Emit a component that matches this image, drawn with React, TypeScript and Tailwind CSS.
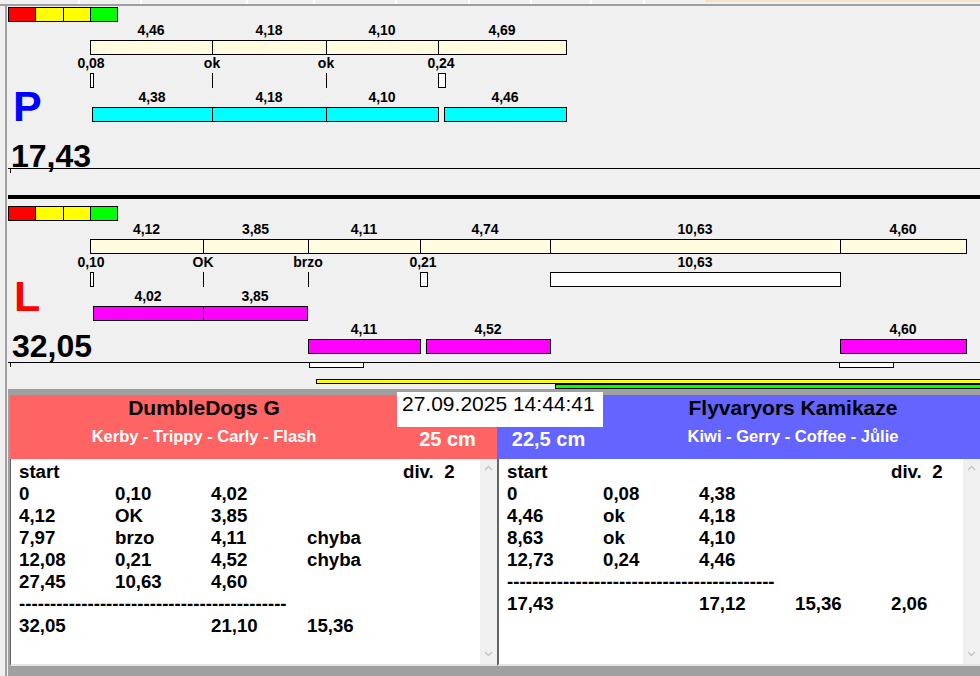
import React from "react";

// Charts are drawn in page coordinates; each svg shifts itself to its panel origin.
const OX = 8;

function R({ x1, x2, y1, y2, fill }: { x1: number; x2: number; y1: number; y2: number; fill: string }) {
  return <rect x={x1 + 0.5} y={y1 + 0.5} width={x2 - x1} height={y2 - y1} fill={fill} stroke="#000" strokeWidth="1" />;
}

function VL({ x, y1, y2 }: { x: number; y1: number; y2: number }) {
  return <line x1={x + 0.5} x2={x + 0.5} y1={y1} y2={y2 + 1} stroke="#000" strokeWidth="1" />;
}

function Texts({ items, base }: { items: [string, number][]; base: number }) {
  return (
    <>
      {items.map(([t, cx], i) => (
        <text key={i} x={cx} y={base} textAnchor="middle">
          {t}
        </text>
      ))}
    </>
  );
}

function Segs({ segs, y1, fill }: { segs: number[][]; y1: number; fill: string }) {
  return (
    <>
      {segs.map(([a, b]) => (
        <R key={a} x1={a} x2={b} y1={y1} y2={y1 + 14} fill={fill} />
      ))}
    </>
  );
}

function Lights({ y1 }: { y1: number }) {
  const y2 = y1 + 14;
  return (
    <>
      <R x1={8} x2={35} y1={y1} y2={y2} fill="#ff0000" />
      <R x1={35} x2={63} y1={y1} y2={y2} fill="#ffff00" />
      <R x1={63} x2={90} y1={y1} y2={y2} fill="#ffff00" />
      <R x1={90} x2={117} y1={y1} y2={y2} fill="#00ff00" />
    </>
  );
}

function Axis({ y }: { y: number }) {
  return (
    <>
      <line x1={OX} x2={990} y1={y + 0.5} y2={y + 0.5} stroke="#000" strokeWidth="1" />
      <VL x={10} y1={y} y2={y + 4} />
    </>
  );
}

const CREAM = "#fffce0";

function ChartSvg({ oy, h, children }: { oy: number; h: number; children: React.ReactNode }) {
  return (
    <svg className="absolute inset-0" width="972" height={h} viewBox={`0 0 972 ${h}`}>
      <g
        transform={`translate(${-OX} ${-oy})`}
        fontFamily="'Liberation Sans', Arial, sans-serif"
        fontSize="14"
        fontWeight="bold"
        fill="#000"
        shapeRendering="crispEdges"
      >
        {children}
      </g>
    </svg>
  );
}

function TopChart() {
  return (
    <div className="relative h-[189px] overflow-hidden">
      <ChartSvg oy={6} h={189}>
        <Lights y1={7} />
        <Texts items={[["4,46", 151], ["4,18", 269], ["4,10", 382], ["4,69", 502]]} base={35} />
        <Segs segs={[[90, 212], [212, 326], [326, 438], [438, 566]]} y1={40} fill={CREAM} />
        <Texts items={[["0,08", 91], ["ok", 212], ["ok", 326], ["0,24", 441]]} base={68} />
        <R x1={90} x2={93} y1={73} y2={87} fill="#fff" />
        <VL x={212} y1={73} y2={87} />
        <VL x={326} y1={73} y2={87} />
        <R x1={438} x2={445} y1={73} y2={87} fill="#fff" />
        <Texts items={[["4,38", 152], ["4,18", 269], ["4,10", 382], ["4,46", 505]]} base={102} />
        <Segs segs={[[92, 212], [212, 326], [326, 438], [444, 566]]} y1={107} fill="#00ffff" />
        <Axis y={168} />
      </ChartSvg>
      <div className="relative flex flex-col items-start pt-[79px] pl-[3px] font-bold">
        <div className="pl-[2px] text-[43px] leading-[43px] text-[#0000ff]">P</div>
        <div className="mt-[12px] text-[32px] leading-[32px] text-black">17,43</div>
      </div>
    </div>
  );
}

function BottomChart() {
  return (
    <div className="relative h-[190px] overflow-hidden">
      <ChartSvg oy={199} h={190}>
        <Lights y1={206} />
        <Texts
          items={[["4,12", 146.5], ["3,85", 255.5], ["4,11", 364], ["4,74", 485], ["10,63", 695], ["4,60", 903]]}
          base={234}
        />
        <Segs segs={[[90, 203], [203, 308], [308, 420], [420, 550], [550, 840], [840, 966]]} y1={239} fill={CREAM} />
        <Texts items={[["0,10", 91], ["OK", 203], ["brzo", 308], ["0,21", 423], ["10,63", 695]]} base={267} />
        <R x1={90} x2={93} y1={272} y2={286} fill="#fff" />
        <VL x={203} y1={272} y2={286} />
        <VL x={308} y1={272} y2={286} />
        <R x1={420} x2={427} y1={272} y2={286} fill="#fff" />
        <R x1={550} x2={840} y1={272} y2={286} fill="#fff" />
        <Texts items={[["4,02", 148], ["3,85", 255]]} base={301} />
        <Segs segs={[[93, 203], [203, 307]]} y1={306} fill="#ff00ff" />
        <Texts items={[["4,11", 364], ["4,52", 488], ["4,60", 903]]} base={334} />
        <Segs segs={[[308, 420], [426, 550], [840, 966]]} y1={339} fill="#ff00ff" />
        <Axis y={362} />
        <R x1={309} x2={363} y1={362} y2={367} fill="#fff" />
        <R x1={839} x2={893} y1={362} y2={367} fill="#fff" />
        <R x1={316} x2={990} y1={379} y2={383} fill="#ffff00" />
        <R x1={555} x2={990} y1={384} y2={388} fill="#00ff00" />
      </ChartSvg>
      <div className="relative flex flex-col items-start pt-[76px] pl-[4px] font-bold">
        <div className="pl-[2px] text-[43px] leading-[43px] text-[#ff0000]">L</div>
        <div className="mt-[12px] text-[32px] leading-[32px] text-black">32,05</div>
      </div>
    </div>
  );
}

function Chevron({ up }: { up?: boolean }) {
  return (
    <svg width="9" height="6" viewBox="0 0 9 6" className="block">
      <path d={up ? "M1 5 L4.5 1.5 L8 5" : "M1 1 L4.5 4.5 L8 1"} fill="none" stroke="#c3c3c3" strokeWidth="1.3" />
    </svg>
  );
}

function ScrollBar() {
  return (
    <div className="w-[17px] shrink-0 bg-[#f0f0f0] flex flex-col items-center justify-between pt-[6px] pb-[7px]">
      <Chevron up />
      <Chevron />
    </div>
  );
}

type Row = string[];

function Sheet({ rows }: { rows: Row[] }) {
  return (
    <div className="flex-1 min-w-0 overflow-hidden pl-[8px] pt-[2px] text-[18.7px] leading-[22px] font-bold text-black">
      {rows.map((r, i) =>
        r.length === 1 && r[0].startsWith("-") ? (
          <div key={i} className="whitespace-nowrap">{r[0]}</div>
        ) : (
          <div key={i} className="flex">
            {r.map((c, j) => (
              <div key={j} className="w-[96px] shrink-0 whitespace-pre">{c}</div>
            ))}
          </div>
        )
      )}
    </div>
  );
}

const DASHES = "-".repeat(43);

const leftRows: Row[] = [
  ["start", "", "", "", "div.  2"],
  ["0", "0,10", "4,02"],
  ["4,12", "OK", "3,85"],
  ["7,97", "brzo", "4,11", "chyba"],
  ["12,08", "0,21", "4,52", "chyba"],
  ["27,45", "10,63", "4,60"],
  [DASHES],
  ["32,05", "", "21,10", "15,36"],
];

const rightRows: Row[] = [
  ["start", "", "", "", "div.  2"],
  ["0", "0,08", "4,38"],
  ["4,46", "ok", "4,18"],
  ["8,63", "ok", "4,10"],
  ["12,73", "0,24", "4,46"],
  [DASHES],
  ["17,43", "", "17,12", "15,36", "2,06"],
];

function TeamTitle({ name, dogs }: { name: string; dogs: string }) {
  return (
    <div className="flex flex-col items-center pt-[2px]">
      <div className="text-[21px] leading-[21px] font-bold text-black whitespace-nowrap">{name}</div>
      <div className="mt-[10px] text-[16.5px] leading-[16.5px] font-bold text-white whitespace-nowrap">{dogs}</div>
    </div>
  );
}

function Height({ text }: { text: string }) {
  return <div className="pt-[34px] text-center text-[20px] leading-[20px] font-bold text-white">{text}</div>;
}

// white tick marks along the top window edge
const TICKS = [78, 140, 246, 313, 395, 468, 530, 590, 643];

export default function App() {
  return (
    <div className="w-[980px] h-[676px] overflow-hidden bg-[#f0f0f0] flex flex-col font-['Liberation_Sans',Arial,sans-serif]">
      <div className="h-[6px] shrink-0 border-b-2 border-[#a0a0a0]">
        <svg width="980" height="4" className="block">
          {TICKS.map((x) => (
            <rect key={x} x={x} y={0} width={2} height={4} fill="#fff" />
          ))}
          <rect x={705} y={0} width={275} height={2} fill="#f3e2c4" />
        </svg>
      </div>
      <div className="flex flex-1 min-h-0">
        <div className="w-[8px] shrink-0 flex">
          <div className="ml-[5px] w-[2px] bg-[#a0a0a0]" />
        </div>
        <div className="flex-1 flex flex-col min-w-0">
          <TopChart />
          <div className="h-[4px] bg-black" />
          <BottomChart />

          <div className="relative flex-1 bg-[#a0a0a0] pt-[6px] pl-[2px] flex">
            {/* left team */}
            <div className="w-[487px] shrink-0 flex flex-col">
              <div className="h-[64px] bg-[#ff6464] flex">
                <div className="w-[388px]">
                  <TeamTitle name="DumbleDogs G" dogs="Kerby - Trippy - Carly - Flash" />
                </div>
                <div className="flex-1">
                  <Height text="25 cm" />
                </div>
              </div>
              <div className="h-[207px] bg-white border-l border-b-2 border-l-[#646464] border-b-[#e3e3e3] flex">
                <Sheet rows={leftRows} />
                <ScrollBar />
              </div>
            </div>

            {/* right team */}
            <div className="flex-1 min-w-0 flex flex-col">
              <div className="h-[64px] bg-[#6464ff] flex">
                <div className="w-[103px] shrink-0">
                  <Height text="22,5 cm" />
                </div>
                <div className="flex-1 min-w-0 pl-[6px]">
                  <TeamTitle name="Flyvaryors Kamikaze" dogs="Kiwi - Gerry - Coffee - Jůlie" />
                </div>
              </div>
              <div className="h-[207px] bg-white border-l-2 border-b-2 border-l-[#646464] border-b-[#e3e3e3] flex">
                <Sheet rows={rightRows} />
                <ScrollBar />
              </div>
            </div>

            {/* date stamp sits over both team headers */}
            <div className="absolute left-[389px] top-[3px] w-[206px] h-[35px] bg-white pl-[5px] pt-[1px] text-[21px] leading-[21px] text-black whitespace-nowrap">
              27.09.2025 14:44:41
            </div>
          </div>
        </div>
      </div>
    </div>
  );
}
